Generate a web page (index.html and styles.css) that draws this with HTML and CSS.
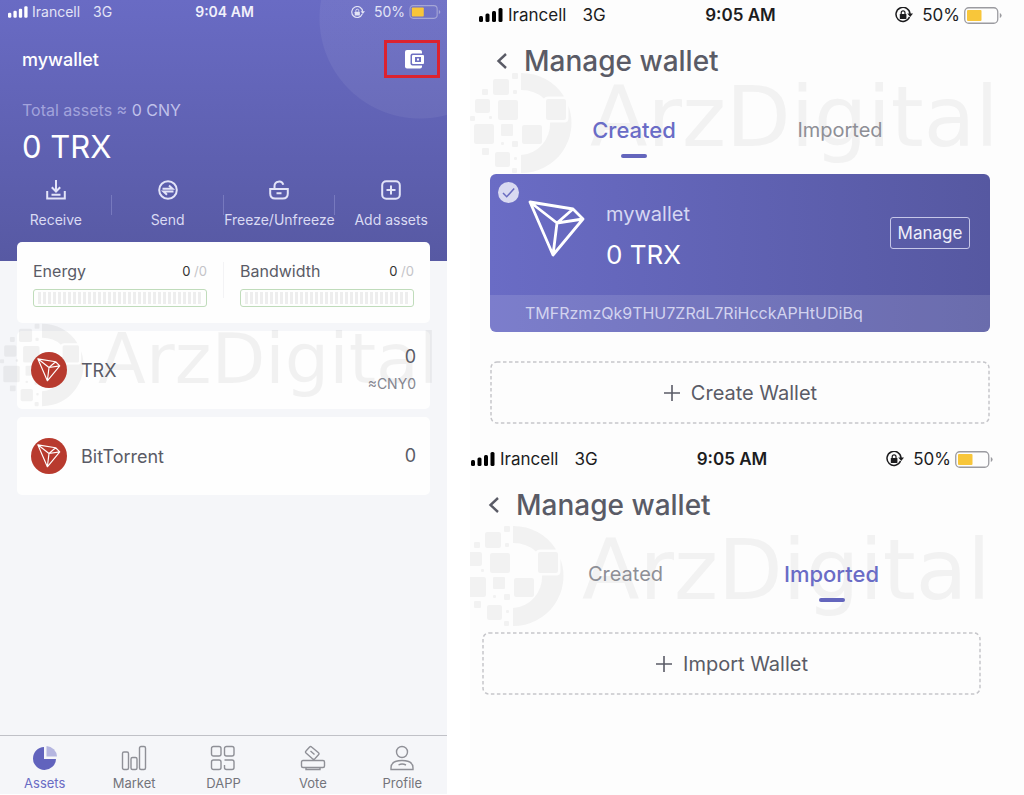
FILE: index.html
```html
<!DOCTYPE html>
<html lang="en">
<head>
<meta charset="utf-8">
<meta name="viewport" content="width=device-width, initial-scale=1">
<title>Wallet</title>
<link rel="stylesheet" href="styles.css">
</head>
<body>
<svg class="sprite" aria-hidden="true">
  <symbol id="signal" viewBox="0 0 24 14"><g fill="currentColor"><rect x="0" y="8" width="4" height="6" rx="1.5"/><rect x="6.5" y="5.5" width="4" height="8.500" rx="1.500"/><rect x="13" y="3" width="4" height="11" rx="1.500"/><rect x="19.500" y="0" width="4" height="14" rx="1.500"/></g></symbol>
  <symbol id="rotlock" viewBox="0 0 18 16"><path d="M14.500 10A7 7 0 1 1 15 7" fill="none" stroke="currentColor" stroke-width="1.500"/><path d="M12.300 6.500H18L15.200 10z" fill="currentColor"/><rect x="4.800" y="7" width="6.600" height="5" rx=".6" fill="currentColor"/><path d="M6.200 7V5.700a1.900 1.900 0 0 1 3.800 0V7" fill="none" stroke="currentColor" stroke-width="1.200"/></symbol>
  <symbol id="battery" viewBox="0 0 38 17"><rect x=".75" y=".75" width="33" height="15.500" rx="4" fill="none" stroke="currentColor" stroke-width="1.300"/><rect x="3" y="3" width="14.500" height="11" rx="1" fill="#f8c63a"/><path d="M35.800 6v5q1.800-.8 1.800-2.500T35.800 6z" fill="currentColor"/></symbol>
  <symbol id="tron" viewBox="-2 -2 58 58"><path d="M0 0 43 7 53 17 23 53ZM0 0 27 21 23 53M43 7 27 21 53 17" fill="none" stroke="currentColor" stroke-width="2.800" stroke-linejoin="round"/></symbol>
  <symbol id="back" viewBox="0 0 12 18"><path d="M10 2 2.500 9 10 16" fill="none" stroke="currentColor" stroke-width="2.400"/></symbol>
  <symbol id="plus" viewBox="0 0 18 18"><path d="M9 1v16M1 9h16" fill="none" stroke="currentColor" stroke-width="1.600"/></symbol>
  <symbol id="mark" viewBox="0 0 102 102">
    <g fill="currentColor">
      <rect x="23" y="7" width="16" height="16" rx="2"/><rect x="42" y="1" width="6" height="6" rx="1"/><rect x="12" y="17" width="6" height="6" rx="1"/><rect x="43" y="18" width="4" height="4" rx="1"/><rect x="5" y="27" width="15" height="14" rx="2"/><rect x="28" y="28" width="20" height="20" rx="2"/><rect x="0" y="44" width="5" height="5" rx="1"/><rect x="19" y="44" width="3" height="3" rx="1"/><rect x="4" y="52" width="20" height="20" rx="2"/><rect x="31" y="52" width="12" height="12" rx="1"/><rect x="52" y="53" width="20" height="19" rx="2"/><rect x="76" y="27" width="20" height="21" rx="2"/><rect x="12" y="76" width="7" height="7" rx="1"/><rect x="25" y="80" width="15" height="15" rx="2"/><rect x="42" y="69" width="6" height="6" rx="1"/><rect x="31" y="70" width="3" height="3" rx="1"/><rect x="44" y="85" width="3" height="3" rx="1"/><rect x="42" y="96" width="5" height="5" rx="1"/>
      <path d="M51 1A50 50 0 0 1 94 24.500H78Q75 24.500 74 26.500 65 18 51 18Z"/>
      <path d="M98.500 34A50 50 0 0 1 51 101V83A31 31 0 0 0 80 50.500H94Q98.500 50.500 98.500 46Z"/>
    </g>
  </symbol>
</svg>
<main class="board">
  <section class="phone">
    <header class="hero">
      <div class="status status-small">
        <span class="carrier"><svg class="i-signal"><use href="#signal"/></svg><span>Irancell</span><span class="net">3G</span></span>
        <b class="time">9:04 AM</b>
        <span class="power"><svg class="i-lock"><use href="#rotlock"/></svg><span>50%</span><svg class="i-batt"><use href="#battery"/></svg></span>
      </div>
      <div class="account">
        <span class="account-name">mywallet</span>
        <button class="wallets" aria-label="Manage wallets"><svg width="19" height="19" viewBox="0 0 19 19"><rect x="0" y="0" width="17" height="18.500" rx="2" fill="#fff"/><rect x="5.500" y="3.500" width="14" height="12" rx="2" fill="#6e70c2"/><rect x="7" y="5" width="12" height="9" rx="1" fill="#fff"/><rect x="10" y="7" width="6" height="5" fill="#6e70c2"/><rect x="12" y="8.500" width="2" height="2" fill="#fff"/></svg></button>
      </div>
      <p class="total">Total assets ≈ <span>0 CNY</span></p>
      <p class="balance">0 TRX</p>
      <nav class="actions">
        <button><svg width="20" height="20" viewBox="0 0 20 20"><path d="M1.200 11v7.500h17.600V11M10 0v11M5.800 7.300 10 11.500l4.200-4.200M5.500 14.700h9"/></svg>Receive</button>
        <button><svg width="20" height="20" viewBox="0 0 20 20"><circle cx="10" cy="10" r="8.800"/><path d="M4.500 8.700h10L11 5.500M15.500 11.500h-10L9 14.700"/></svg>Send</button>
        <button><svg width="20" height="20" viewBox="0 0 20 20"><path d="M1.200 9h17.600v4.500q0 5-5 5H6.200q-5 0-5-5zM5.500 8.500V6a4.500 4.500 0 0 1 8.800-1.200M7.500 13.300h5"/></svg>Freeze/Unfreeze</button>
        <button><svg width="20" height="20" viewBox="0 0 20 20"><rect x="1.200" y="1.200" width="17.600" height="17.600" rx="4"/><path d="M10 5.500v9M5.500 10h9"/></svg>Add assets</button>
      </nav>
    </header>
    <div class="cards">
      <div class="card meters">
        <div class="meter"><div class="meter-head"><span>Energy</span><span class="quota">0 <i>/0</i></span></div><div class="track"></div></div>
        <div class="meter"><div class="meter-head"><span>Bandwidth</span><span class="quota">0 <i>/0</i></span></div><div class="track"></div></div>
      </div>
      <div class="card asset">
        <div class="watermark watermark-small" aria-hidden="true"><svg><use href="#mark"/></svg><span>ArzDigital</span></div>
        <span class="coin"><svg><use href="#tron"/></svg></span>
        <span class="asset-name">TRX</span>
        <span class="asset-value">0<small>≈CNY0</small></span>
      </div>
      <div class="card asset">
        <span class="coin"><svg><use href="#tron"/></svg></span>
        <span class="asset-name">BitTorrent</span>
        <span class="asset-value">0</span>
      </div>
    </div>
    <nav class="tabbar">
      <a class="on" href="#assets"><svg width="26" height="26" viewBox="0 0 26 26"><path d="M12 2v12h12A11.500 11.500 0 1 1 12 2z" fill="#6163bd"/><path d="M14.500 1A11 11 0 0 1 25 11.500H14.500z" fill="#b5b6e0"/></svg>Assets</a>
      <a href="#market"><svg width="26" height="26" viewBox="0 0 26 26"><rect x="1.500" y="7" width="6" height="17.500" rx="1.500"/><rect x="10" y="12.500" width="6" height="12" rx="1.500"/><rect x="18.500" y="1.500" width="6" height="23" rx="1.500"/></svg>Market</a>
      <a href="#dapp"><svg width="26" height="26" viewBox="0 0 26 26"><rect x="1.500" y="1.500" width="9.500" height="9.500" rx="2"/><rect x="14.500" y="1.500" width="9.500" height="9.500" rx="2"/><rect x="1.500" y="15" width="9.500" height="9.500" rx="2"/><path d="M14.500 15H22q2 0 2 2v5.500q0 2-2 2h-5.500q-2 0-2-2V20"/></svg>DAPP</a>
      <a href="#vote"><svg width="26" height="26" viewBox="0 0 26 26"><path d="M8 15.500H3q-1.500 0-1.500 1.500v4q0 1.500 1.500 1.500h20q1.500 0 1.500-1.500v-4q0-1.500-1.500-1.500h-5M6 22.500V24.500h14V22.500M8 15.500h10M12.500 13.700 6 7.900q-1-1 0-2L9.600 2q1-1 2 0L18.500 7.800q1 1 0 2L14.900 13.700q-1.200 1-2.400 0zM10.500 6l4 3.500"/></svg>Vote</a>
      <a href="#profile"><svg width="26" height="26" viewBox="0 0 26 26"><circle cx="13" cy="7" r="5.500"/><path d="M2 24.500v-1.500c0-5 4-7.500 11-7.500s11 2.500 11 7.500v1.500zM9.500 20q3.500-2 7.500 0"/></svg>Profile</a>
    </nav>
  </section>

  <div class="screens">
    <section class="screen screen-created">
      <div class="watermark" aria-hidden="true"><svg><use href="#mark"/></svg><span>ArzDigital</span></div>
      <div class="status">
        <span class="carrier"><svg class="i-signal"><use href="#signal"/></svg><span>Irancell</span><span class="net">3G</span></span>
        <b class="time">9:05 AM</b>
        <span class="power"><svg class="i-lock"><use href="#rotlock"/></svg><span>50%</span><svg class="i-batt"><use href="#battery"/></svg></span>
      </div>
      <header class="title"><button aria-label="Back"><svg width="12" height="18"><use href="#back"/></svg></button><h1>Manage wallet</h1></header>
      <nav class="tabs"><a class="on" href="#created">Created</a><a href="#imported">Imported</a></nav>
      <article class="wallet">
        <svg class="check" viewBox="0 0 21 21"><circle cx="10.500" cy="10.500" r="10.500" fill="#d9daf1"/><path d="M5 11l3.700 3.700L16.200 6.500" fill="none" stroke="#696bc0" stroke-width="1.500"/></svg>
        <div class="wallet-main">
          <svg class="wallet-logo"><use href="#tron"/></svg>
          <div class="wallet-text"><span>mywallet</span><strong>0 TRX</strong></div>
          <button class="manage">Manage</button>
        </div>
        <div class="address">TMFRzmzQk9THU7ZRdL7RiHcckAPHtUDiBq</div>
      </article>
      <button class="add"><svg class="outline" aria-hidden="true"><rect width="100%" height="100%" rx="6"/></svg><svg width="18" height="18"><use href="#plus"/></svg>Create Wallet</button>
    </section>
    <section class="screen screen-imported">
      <div class="watermark" aria-hidden="true"><svg><use href="#mark"/></svg><span>ArzDigital</span></div>
      <div class="status">
        <span class="carrier"><svg class="i-signal"><use href="#signal"/></svg><span>Irancell</span><span class="net">3G</span></span>
        <b class="time">9:05 AM</b>
        <span class="power"><svg class="i-lock"><use href="#rotlock"/></svg><span>50%</span><svg class="i-batt"><use href="#battery"/></svg></span>
      </div>
      <header class="title"><button aria-label="Back"><svg width="12" height="18"><use href="#back"/></svg></button><h1>Manage wallet</h1></header>
      <nav class="tabs"><a href="#created2">Created</a><a class="on" href="#imported2">Imported</a></nav>
      <button class="add"><svg class="outline" aria-hidden="true"><rect width="100%" height="100%" rx="6"/></svg><svg width="18" height="18"><use href="#plus"/></svg>Import Wallet</button>
    </section>
  </div>
</main>
</body>
</html>
```

FILE: styles.css
```css
* { box-sizing: border-box; }
body { margin: 0; background: #fff; color: #5a5b66; font-family: Inter, "Liberation Sans", sans-serif; }
button { padding: 0; border: 0; background: none; color: inherit; font: inherit; cursor: pointer; }
a { color: inherit; text-decoration: none; }
p, h1 { margin: 0; }
svg { display: block; flex: none; }
.sprite { position: absolute; width: 0; height: 0; }

.board { display: grid; grid-template-columns: 447fr 554fr; column-gap: 23px; min-height: 100vh; }

/* status bar */
.status { display: grid; grid-template-columns: 1fr auto 1fr; align-items: center; height: 30px; font-size: 17px; line-height: 20px; color: #1c1c1e; }
.carrier, .power { display: flex; align-items: center; }
.power { justify-content: flex-end; }
.time { font-weight: 600; }
.i-signal { width: 24px; height: 14px; margin-right: 5px; color: #000; }
.net { margin-left: 16px; }
.i-lock { width: 18px; height: 16px; margin-right: 9px; }
.i-batt { width: 38px; height: 17px; margin-left: 4px; color: #9b9ba0; }
.status-small { height: 24px; padding: 0 6px 0 8px; font-size: 14px; color: #e3e4f6; }
.status-small .time { color: #f1f1fb; }
.status-small .i-signal { width: 20px; height: 12px; margin-right: 4px; color: #fff; }
.status-small .net { margin-left: 13px; }
.status-small .i-lock { width: 14px; height: 13px; }
.status-small .i-batt { width: 32px; height: 14px; color: #a5a6d6; }

/* assets screen */
.phone { display: flex; flex-direction: column; margin-bottom: 1px; overflow: hidden; background: #f5f6f9; }
.hero { height: 261px; background: radial-gradient(circle at calc(100% - 27px) 18px, rgba(255,255,255,.06) 100px, transparent 101px), linear-gradient(#696bc4, #5759a3); color: #fff; }
.account { display: flex; justify-content: space-between; align-items: center; height: 38px; margin-top: 16px; padding: 0 7px 0 22px; font-size: 18px; font-weight: 500; }
.wallets { display: flex; justify-content: flex-end; align-items: center; width: 56px; height: 38px; padding-right: 13px; border: 3px solid #dc2230; }
.total { margin-top: 20px; padding-left: 22px; font-size: 16px; line-height: 24px; color: #a2a3dc; }
.total span { color: #c0c1ea; }
.balance { padding-left: 22px; margin-top: 6px; font-size: 31px; line-height: 38px; }
.actions { display: grid; grid-template-columns: repeat(4, 1fr); margin-top: 14px; }
.actions button { display: flex; flex-direction: column; align-items: center; gap: 10px; font-size: 14px; line-height: 20px; color: #d9daf3; white-space: nowrap; background: linear-gradient(#7779be, #7779be) right 15px / 1px 20px no-repeat; }
.actions button:last-child { background: none; }
.actions svg { fill: none; stroke: #e3e4f8; stroke-width: 2; }

.cards { display: flex; flex-direction: column; gap: 8px; margin: -19px 17px 0; }
.card { background: #fefefe; border-radius: 5px; }
.meters { display: grid; grid-template-columns: 1fr 1fr; column-gap: 33px; height: 81px; padding: 18px 16px; background: linear-gradient(#f3f3f5, #f3f3f5) center 20px / 1px 36px no-repeat #fefefe; }
.meter-head { display: flex; justify-content: space-between; align-items: center; font-size: 16px; line-height: 22px; }
.quota { font-size: 13px; color: #333; }
.quota i { font-style: normal; color: #c4c4c8; }
.track { height: 18px; margin-top: 7px; border: 1px solid #c0dcbb; border-radius: 3px; background: repeating-linear-gradient(90deg, #eee 0 3px, #fff 3px 5px) content-box; padding: 2px 4px; }
.asset { position: relative; display: flex; align-items: center; height: 78px; padding: 0 14px; font-size: 18px; }
.coin { position: relative; display: grid; place-items: center; width: 36px; height: 36px; border-radius: 50%; background: #b83a2e; color: #fff; }
.coin svg { width: 24px; height: 24px; }
.asset-name { position: relative; margin-left: 14px; }
.asset-value { position: relative; display: flex; flex-direction: column; gap: 6px; margin-left: auto; text-align: right; line-height: 22px; }
.asset-value small { font-size: 14px; line-height: 20px; color: #84858f; }

.tabbar { display: grid; grid-template-columns: repeat(5, 1fr); margin-top: auto; height: 59px; padding-top: 9px; border-top: 1px solid #c0c1c7; font-size: 13px; line-height: 18px; color: #73747b; }
.tabbar a { display: flex; flex-direction: column; align-items: center; gap: 3px; }
.tabbar svg { fill: none; stroke: #8f9097; stroke-width: 1.4; }
.tabbar .on { color: #696bc4; }
.tabbar .on svg { stroke: none; }

/* watermark behind the content */
.watermark { position: absolute; z-index: 0; top: 72px; left: 0; display: flex; align-items: flex-start; gap: 18px; font-family: "DejaVu Sans", sans-serif; font-size: 84px; line-height: 90px; white-space: nowrap; color: #f2f2f2; pointer-events: none; }
.watermark svg { width: 102px; height: 102px; }
.watermark-small { top: -8px; left: -17px; gap: 14px; font-size: 70px; line-height: 72px; color: rgba(0,0,0,.05); }
.watermark-small svg { width: 84px; height: 84px; }

/* manage wallet screens */
.screens { display: flex; flex-direction: column; }
.screen { position: relative; overflow: hidden; height: 444px; padding: 0 34px 0 20px; background: #fdfdfd; }
.screen > :not(.watermark) { position: relative; }
.screen-imported { flex: 1; height: auto; padding: 0 43px 0 12px; }
.screen-imported .watermark { top: 81px; left: -8px; }
.screen .status { margin: 0 -12px 0 -11px; }
.title { display: flex; align-items: center; gap: 16px; height: 62px; padding-left: 6px; }
h1 { font-size: 28px; line-height: 36px; font-weight: 500; }
.tabs { display: grid; grid-template-columns: 206px 206px; justify-content: center; height: 82px; padding: 24px 6px 0 0; font-size: 20px; line-height: 28px; color: #8e8f96; text-align: center; }
.tabs .on { font-size: 22px; font-weight: 500; color: #6a6cc6; }
.tabs .on::after { content: ""; display: block; width: 26px; height: 4px; margin: 10px auto 0; border-radius: 2px; background: #6466bd; }
.wallet { overflow: hidden; border-radius: 6px; background: linear-gradient(90deg, #6a6cc5, #5658a1); color: #fff; }
.check { position: absolute; top: 8px; left: 8px; width: 21px; height: 21px; }
.wallet-main { display: flex; align-items: center; height: 121px; padding: 0 20px 0 38px; }
.wallet-logo { width: 58px; height: 58px; margin-bottom: 12px; }
.wallet-text { display: flex; flex-direction: column; gap: 10px; margin: 4px 0 0 20px; font-size: 20px; line-height: 26px; color: #d6d7f2; }
.wallet-text strong { font-size: 26px; line-height: 36px; font-weight: 400; color: #fff; }
.manage { width: 80px; height: 32px; margin: 0 0 4px auto; border: 1px solid #c6c7e8; border-radius: 3px; font-size: 17px; color: #eeeefa; }
.address { padding-left: 35px; background: rgba(255,255,255,.12); font-size: 16px; line-height: 37px; color: #d2d3ef; }
.add { display: flex; justify-content: center; align-items: center; gap: 10px; width: 100%; height: 63px; font-size: 20px; }
.outline { position: absolute; inset: 1px; width: calc(100% - 2px); height: calc(100% - 2px); overflow: visible; fill: none; stroke: #c6c6ca; stroke-width: 1.5; stroke-dasharray: 3.5 2.5; }
.wallet + .add { margin-top: 29px; }
.screen-imported .tabs { height: 96px; }
```
